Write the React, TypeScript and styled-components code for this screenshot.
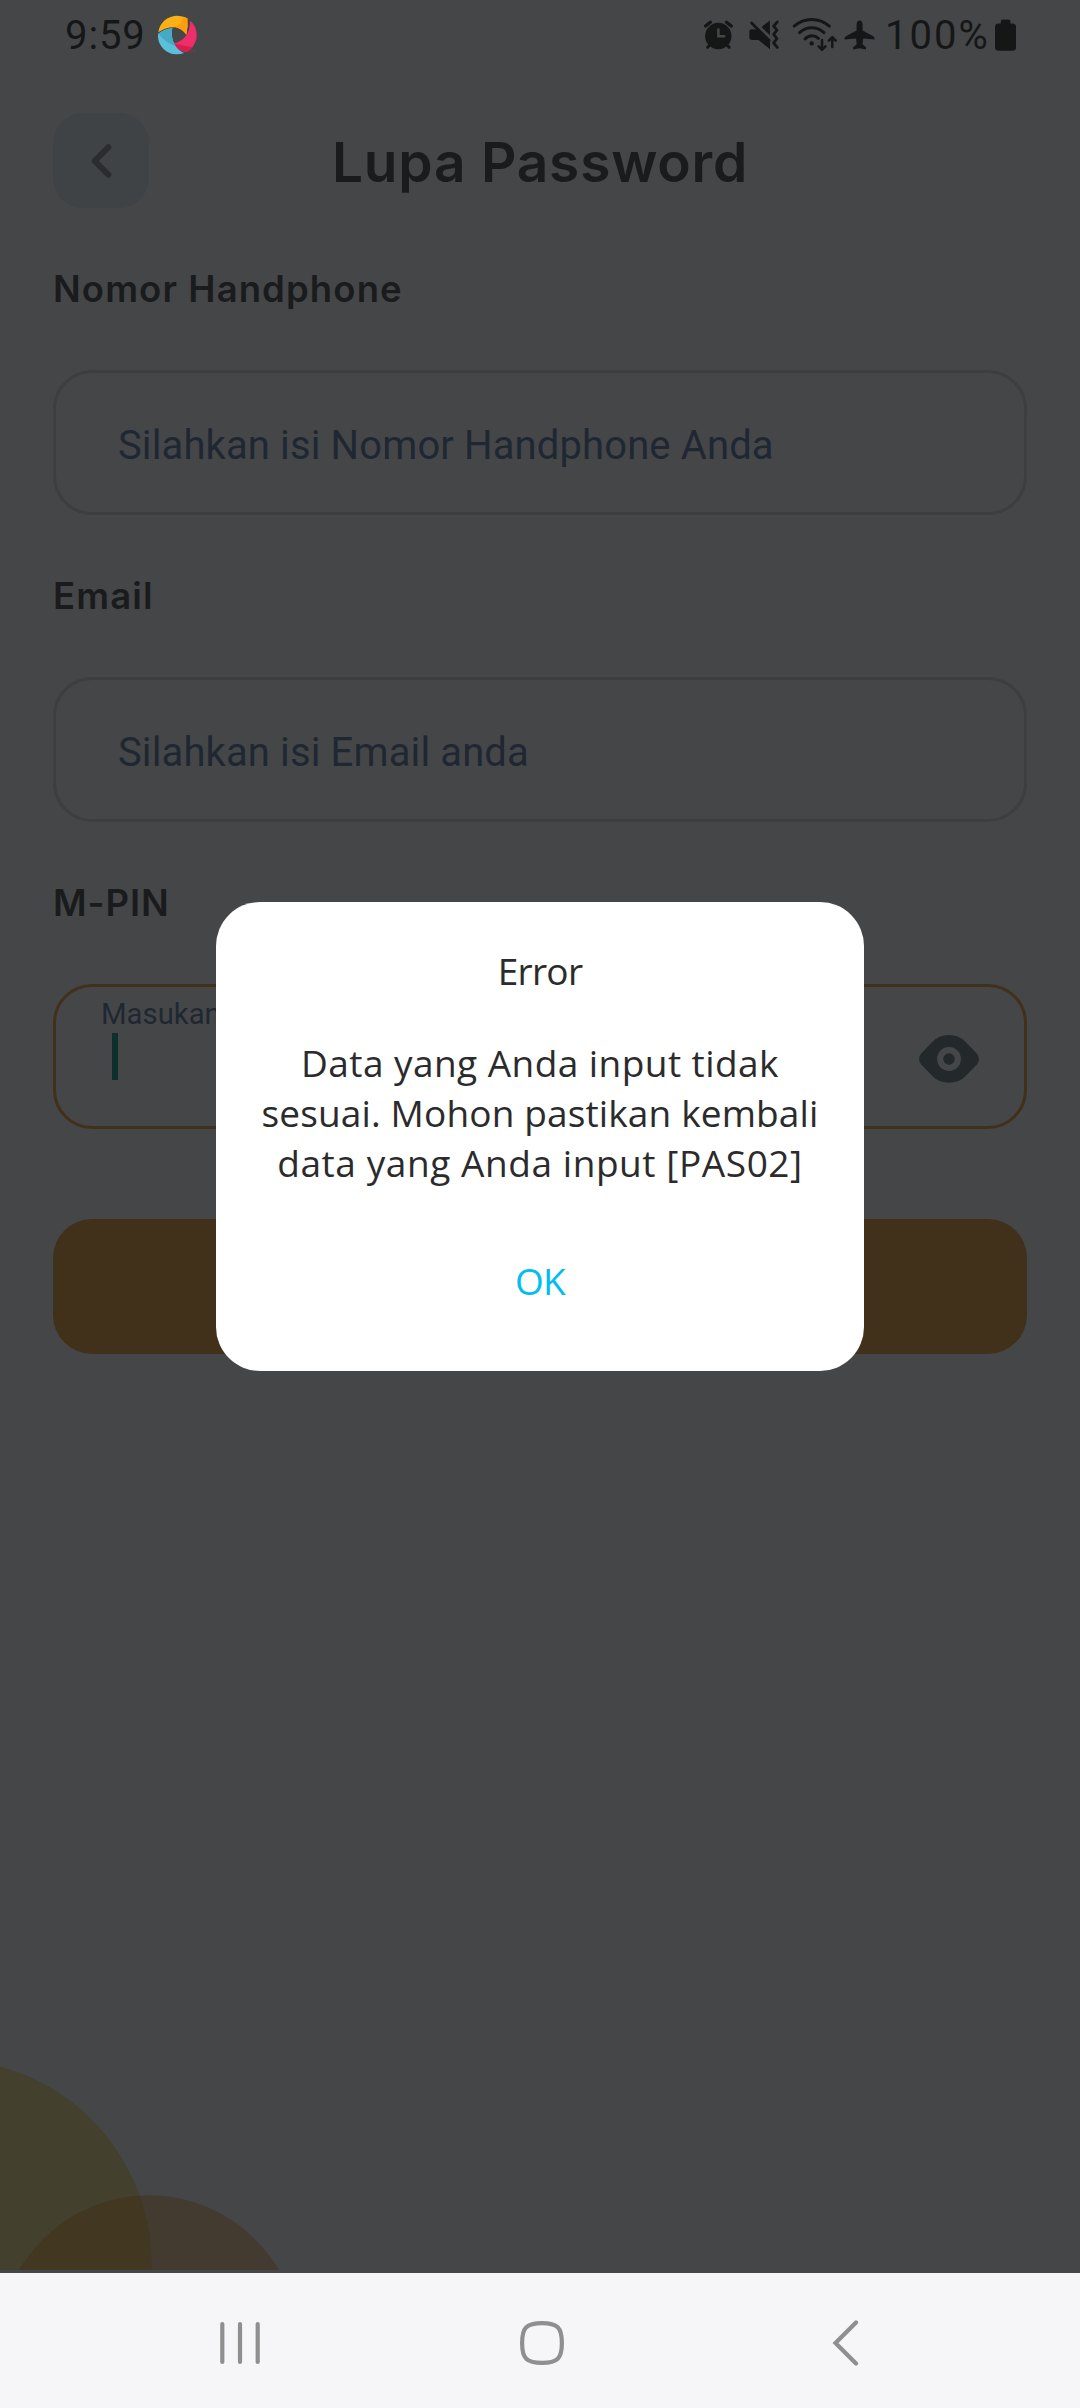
import React from 'react';
import styled, { createGlobalStyle } from 'styled-components';

const color = {
  page: '#454648',
  ink: '#1a1b1d',
  status: '#151717',
  hint: '#1f2832',
  line: '#3d3e40',
  accent: '#41311a',
  nav: '#f6f6f8',
  navIcon: '#8f8f8f',
  link: '#00bdf2',
};

const GlobalStyle = createGlobalStyle`
  *, *::before, *::after { box-sizing: border-box; }
  html, body { margin: 0; background: ${color.page}; }
  svg { display: block; flex: none; }
  button { border: 0; padding: 0; background: none; font: inherit; color: inherit; }
`;

const Phone = styled.div`
  width: 1080px;
  height: 2408px;
  display: flex;
  flex-direction: column;
  overflow: hidden;
  font-family: Inter, 'Liberation Sans', sans-serif;
`;

const Screen = styled.main`
  position: relative;
  height: 2273px;
  background: ${color.page};
  color: ${color.ink};
`;

const StatusBar = styled.div`
  display: flex;
  align-items: center;
  height: 70px;
  padding: 0 64px 0 65px;
  color: ${color.status};
  font: 400 40px/70px Roboto, sans-serif;
`;

const Clock = styled.span`
  width: 92px;
  padding-top: 2px;
  letter-spacing: 0.9px;
`;

const StatusIcons = styled.div`
  display: flex;
  margin-left: auto;
`;

const Battery = styled.span`
  width: 110px;
  padding-top: 1px;
  letter-spacing: 2px;
`;

const Header = styled.header`
  display: grid;
  grid-template-columns: 96px 1fr 96px;
  height: 138px;
  padding: 43px 53px 0;
`;

const BackButton = styled.button`
  display: grid;
  place-items: center;
  height: 95px;
  border-radius: 30px;
  background: #3f4346;
`;

const Title = styled.h1`
  margin: 0;
  padding-top: 2px;
  text-align: center;
  font-size: 55px;
  font-weight: 600;
  line-height: 95px;
  letter-spacing: 0.8px;
  white-space: nowrap;
`;

const Form = styled.form`
  display: flex;
  flex-direction: column;
  gap: 57px;
  padding: 57px 53px 0;
`;

const Label = styled.label<{ $track: number }>`
  font-size: 36.5px;
  font-weight: 600;
  line-height: 48px;
  letter-spacing: ${p => p.$track}px;
`;

const Field = styled.div<{ $active?: boolean }>`
  display: flex;
  align-items: ${p => (p.$active ? 'stretch' : 'center')};
  justify-content: space-between;
  height: 145px;
  padding: ${p => (p.$active ? '10px 45px 0' : '5px 62px 0')};
  border: 3px solid ${p => (p.$active ? color.accent : color.line)};
  border-radius: 39px;
  color: ${color.hint};
  font-family: Roboto, sans-serif;
`;

const Placeholder = styled.span`
  font-size: 40px;
  letter-spacing: 0.12px;
`;

const PinEntry = styled.div`
  display: flex;
  flex-direction: column;
`;

const FloatingLabel = styled.span`
  font-size: 29.3px;
  line-height: 34px;
`;

const Caret = styled.i`
  width: 6px;
  height: 47px;
  margin: 2px 0 0 11px;
  background: #0f2f2c;
`;

const EyeSlot = styled.button`
  display: flex;
  padding-top: 37px;
`;

const Submit = styled.button`
  height: 135px;
  margin-top: 33px;
  border-radius: 39px;
  background: ${color.accent};
`;

const Scenery = styled.svg`
  position: absolute;
  left: 0;
  bottom: 3px;
`;

const Overlay = styled.div`
  position: absolute;
  inset: 0;
  display: flex;
  align-items: center;
  justify-content: center;
`;

const Dialog = styled.section`
  display: flex;
  flex-direction: column;
  align-items: center;
  width: 648px;
  height: 469px;
  padding-top: 44px;
  border-radius: 44px;
  background: #fff;
  color: #2b2b2c;
  font: 400 37px/50px 'Open Sans', sans-serif;
`;

const DialogTitle = styled.h2`
  margin: 0;
  font-size: inherit;
  font-weight: 400;
  letter-spacing: -0.7px;
`;

const DialogBody = styled.p`
  display: flex;
  flex-direction: column;
  align-items: center;
  margin: 42px 0 68px;
`;

const Line = styled.span<{ $track: number }>`
  white-space: nowrap;
  letter-spacing: ${p => p.$track}px;
`;

const DialogAction = styled.button`
  color: ${color.link};
  letter-spacing: -0.8px;
`;

const NavBar = styled.nav`
  display: grid;
  grid-template-columns: repeat(3, 1fr);
  place-items: center;
  height: 135px;
  padding: 5px 84px 0 89px;
  background: ${color.nav};
`;

const AppLogo = () => (
  <svg width="41" height="41" viewBox="352 45 123 123">
    <path fill="#fbb015" d="M356 97C359 68 384 48 410 47Q430 47 443 55Q446 80 440 104C424 76 388 76 356 97Z" />
    <path fill="#ff9d0a" d="M443 55Q446 80 440 104Q427 86 404 80Q428 74 430 50Z" />
    <path fill="#ee2d6b" d="M451 62C468 74 474 98 470 118Q462 145 443 155C424 156 408 146 402 130C432 124 452 100 451 62Z" />
    <path fill="#d81e4c" d="M402 130Q430 138 458 141Q452 150 443 155C424 156 408 146 402 130Z" />
    <path fill="#5cbfd8" d="M398 85C392 118 406 148 433 159C396 174 352 146 355 102Q372 87 398 85Z" />
    <path fill="#46a9c6" d="M398 85C394 106 398 124 408 139Q378 128 356 101Q374 87 398 85Z" />
    <path stroke="#a8284f" strokeWidth="3" d="M453 153h5M460 153h6" />
  </svg>
);

const AlarmIcon = () => (
  <svg width="44" height="70" viewBox="704 0 44 70" fill="none" stroke="currentColor" strokeLinecap="round">
    <circle cx="718.3" cy="36" r="13.2" fill="currentColor" stroke="none" />
    <path strokeWidth="3.4" d="M705.6 26l4.6-3.8M726.6 22.2l4.6 3.8" />
    <path strokeWidth="3" d="M707.6 47.3l3.4-3.4M729.2 47.3l-3.4-3.4" />
    <path stroke={color.page} strokeWidth="2.6" d="M718.4 29.5v6.8h5.8" />
  </svg>
);

const MuteIcon = () => (
  <svg width="44" height="70" viewBox="748 0 44 70" fill="currentColor">
    <path d="M761.5 27L769.9 20.6V35.3Z" />
    <path d="M752 29.3H756.5L770 42.5V49.2L758.5 40H752Q749.3 40 749.3 37.3V32Q749.3 29.3 752 29.3Z" />
    <g fill="none" stroke="currentColor" strokeLinecap="round">
      <path strokeWidth="2.8" d="M751.6 23L769.2 40.6" />
      <path strokeWidth="2.8" strokeLinejoin="round" d="M777.3 21.9L773.6 26.2L777 30.2L773.6 34.4L777 38.6L773.6 42.8L777.3 47.4" />
    </g>
  </svg>
);

const WifiIcon = () => (
  <svg width="51" height="70" viewBox="792 0 51 70" fill="none" stroke="currentColor" strokeWidth="3" strokeLinecap="round" strokeLinejoin="round">
    <path d="M794.2 26.2Q802 19.5 811.8 19.5Q821.5 19.5 829.3 26.2M799.5 32.6Q805 27.8 811.8 27.8Q818.6 27.8 824 32.6M805 39Q808 35.8 811.8 35.8Q815.6 35.8 818.4 38.3" />
    <circle cx="811.7" cy="43.4" r="2.2" fill="currentColor" stroke="none" />
    <path strokeWidth="2.5" d="M822 40V49.7M818.6 46.4L822 49.8L825.4 46.4M832.3 47V37.2M828.9 40.6L832.3 37.2L835.7 40.6" />
  </svg>
);

const PlaneIcon = () => (
  <svg width="42" height="70" viewBox="843 0 42 70" fill="currentColor">
    <path d="M859.6 20.6C861.7 20.6 862.6 22.5 862.6 24.5V30.4L873.3 36.3Q874.8 37.3 874.6 39.6L863.2 38.6L862.5 44.2L866 47.2V49.5L859.6 48.2L853.2 49.5V47.2L856.7 44.2L856 38.6L844.6 39.6Q844.4 37.3 845.9 36.3L856.6 30.4V24.5C856.6 22.5 857.5 20.6 859.6 20.6Z" />
  </svg>
);

const BatteryIcon = () => (
  <svg width="21" height="70" viewBox="995 0 21 70" fill="currentColor">
    <rect x="995" y="23.5" width="21" height="27.3" rx="3.5" />
    <rect x="1000.8" y="19.4" width="9.6" height="8" rx="2" />
  </svg>
);

const ChevronIcon = () => (
  <svg width="96" height="95" viewBox="53 113 96 95" fill="none" stroke="#2b2c2e" strokeWidth="6" strokeLinecap="round" strokeLinejoin="round">
    <path d="M108.3 147.3L94.8 161L108.3 174.7" />
  </svg>
);

const EyeIcon = () => (
  <svg width="60" height="50" viewBox="919 1034 60 50">
    <path fill="#23282b" d="M921.2 1053.6L932.3 1042Q939 1035.1 949 1035.1T965.7 1042L976.8 1053.6Q981.2 1059 976.8 1064.4L965.7 1076Q959 1082.8 949 1082.8T932.3 1076L921.2 1064.4Q916.8 1059 921.2 1053.6Z" />
    <circle cx="949" cy="1059" r="8.8" fill="#23282b" stroke={color.page} strokeWidth="6.2" />
  </svg>
);

export default function App() {
  return (
    <Phone>
      <GlobalStyle />
      <Screen>
        <Scenery width="300" height="210" viewBox="0 2060 300 210">
          <circle cx="-53" cy="2264" r="204.5" fill="#44402e" />
          <circle cx="149" cy="2345.8" r="150.5" fill="rgba(64, 44, 17, 0.42)" />
        </Scenery>
        <StatusBar>
          <Clock>9:59</Clock>
          <AppLogo />
          <StatusIcons>
            <AlarmIcon />
            <MuteIcon />
            <WifiIcon />
            <PlaneIcon />
            <Battery>100%</Battery>
            <BatteryIcon />
          </StatusIcons>
        </StatusBar>
        <Header>
          <BackButton type="button" aria-label="Kembali">
            <ChevronIcon />
          </BackButton>
          <Title>Lupa Password</Title>
        </Header>
        <Form>
          <Label $track={1.1}>Nomor Handphone</Label>
          <Field>
            <Placeholder>Silahkan isi Nomor Handphone Anda</Placeholder>
          </Field>
          <Label $track={1.15}>Email</Label>
          <Field>
            <Placeholder>Silahkan isi Email anda</Placeholder>
          </Field>
          <Label $track={0.9}>M-PIN</Label>
          <Field $active>
            <PinEntry>
              <FloatingLabel>Masukan</FloatingLabel>
              <Caret />
            </PinEntry>
            <EyeSlot type="button">
              <EyeIcon />
            </EyeSlot>
          </Field>
          <Submit type="button" />
        </Form>
        <Overlay>
          <Dialog role="alertdialog">
            <DialogTitle>Error</DialogTitle>
            <DialogBody>
              <Line $track={0.44}>Data yang Anda input tidak</Line>
              <Line $track={0.14}>sesuai. Mohon pastikan kembali</Line>
              <Line $track={0.57}>data yang Anda input [PAS02]</Line>
            </DialogBody>
            <DialogAction type="button">OK</DialogAction>
          </Dialog>
        </Overlay>
      </Screen>
      <NavBar>
        <svg width="42" height="44" viewBox="219 2321 42 44" stroke={color.navIcon} strokeWidth="4.2" strokeLinecap="round">
          <path d="M222.3 2324V2362M240 2324V2362M257.7 2324V2362" />
        </svg>
        <svg width="46" height="46" viewBox="0 0 46 46" fill="none" stroke={color.navIcon} strokeWidth="4.2">
          <path d="M23 3.1C38.5 3.1 42.9 7.5 42.9 23S38.5 42.9 23 42.9S3.1 38.5 3.1 23S7.5 3.1 23 3.1Z" />
        </svg>
        <svg width="28" height="46" viewBox="831 2320 28 46" fill="none" stroke={color.navIcon} strokeWidth="4.2" strokeLinecap="round">
          <path d="M856 2322.5L835.5 2343L856 2363.5" />
        </svg>
      </NavBar>
    </Phone>
  );
}
